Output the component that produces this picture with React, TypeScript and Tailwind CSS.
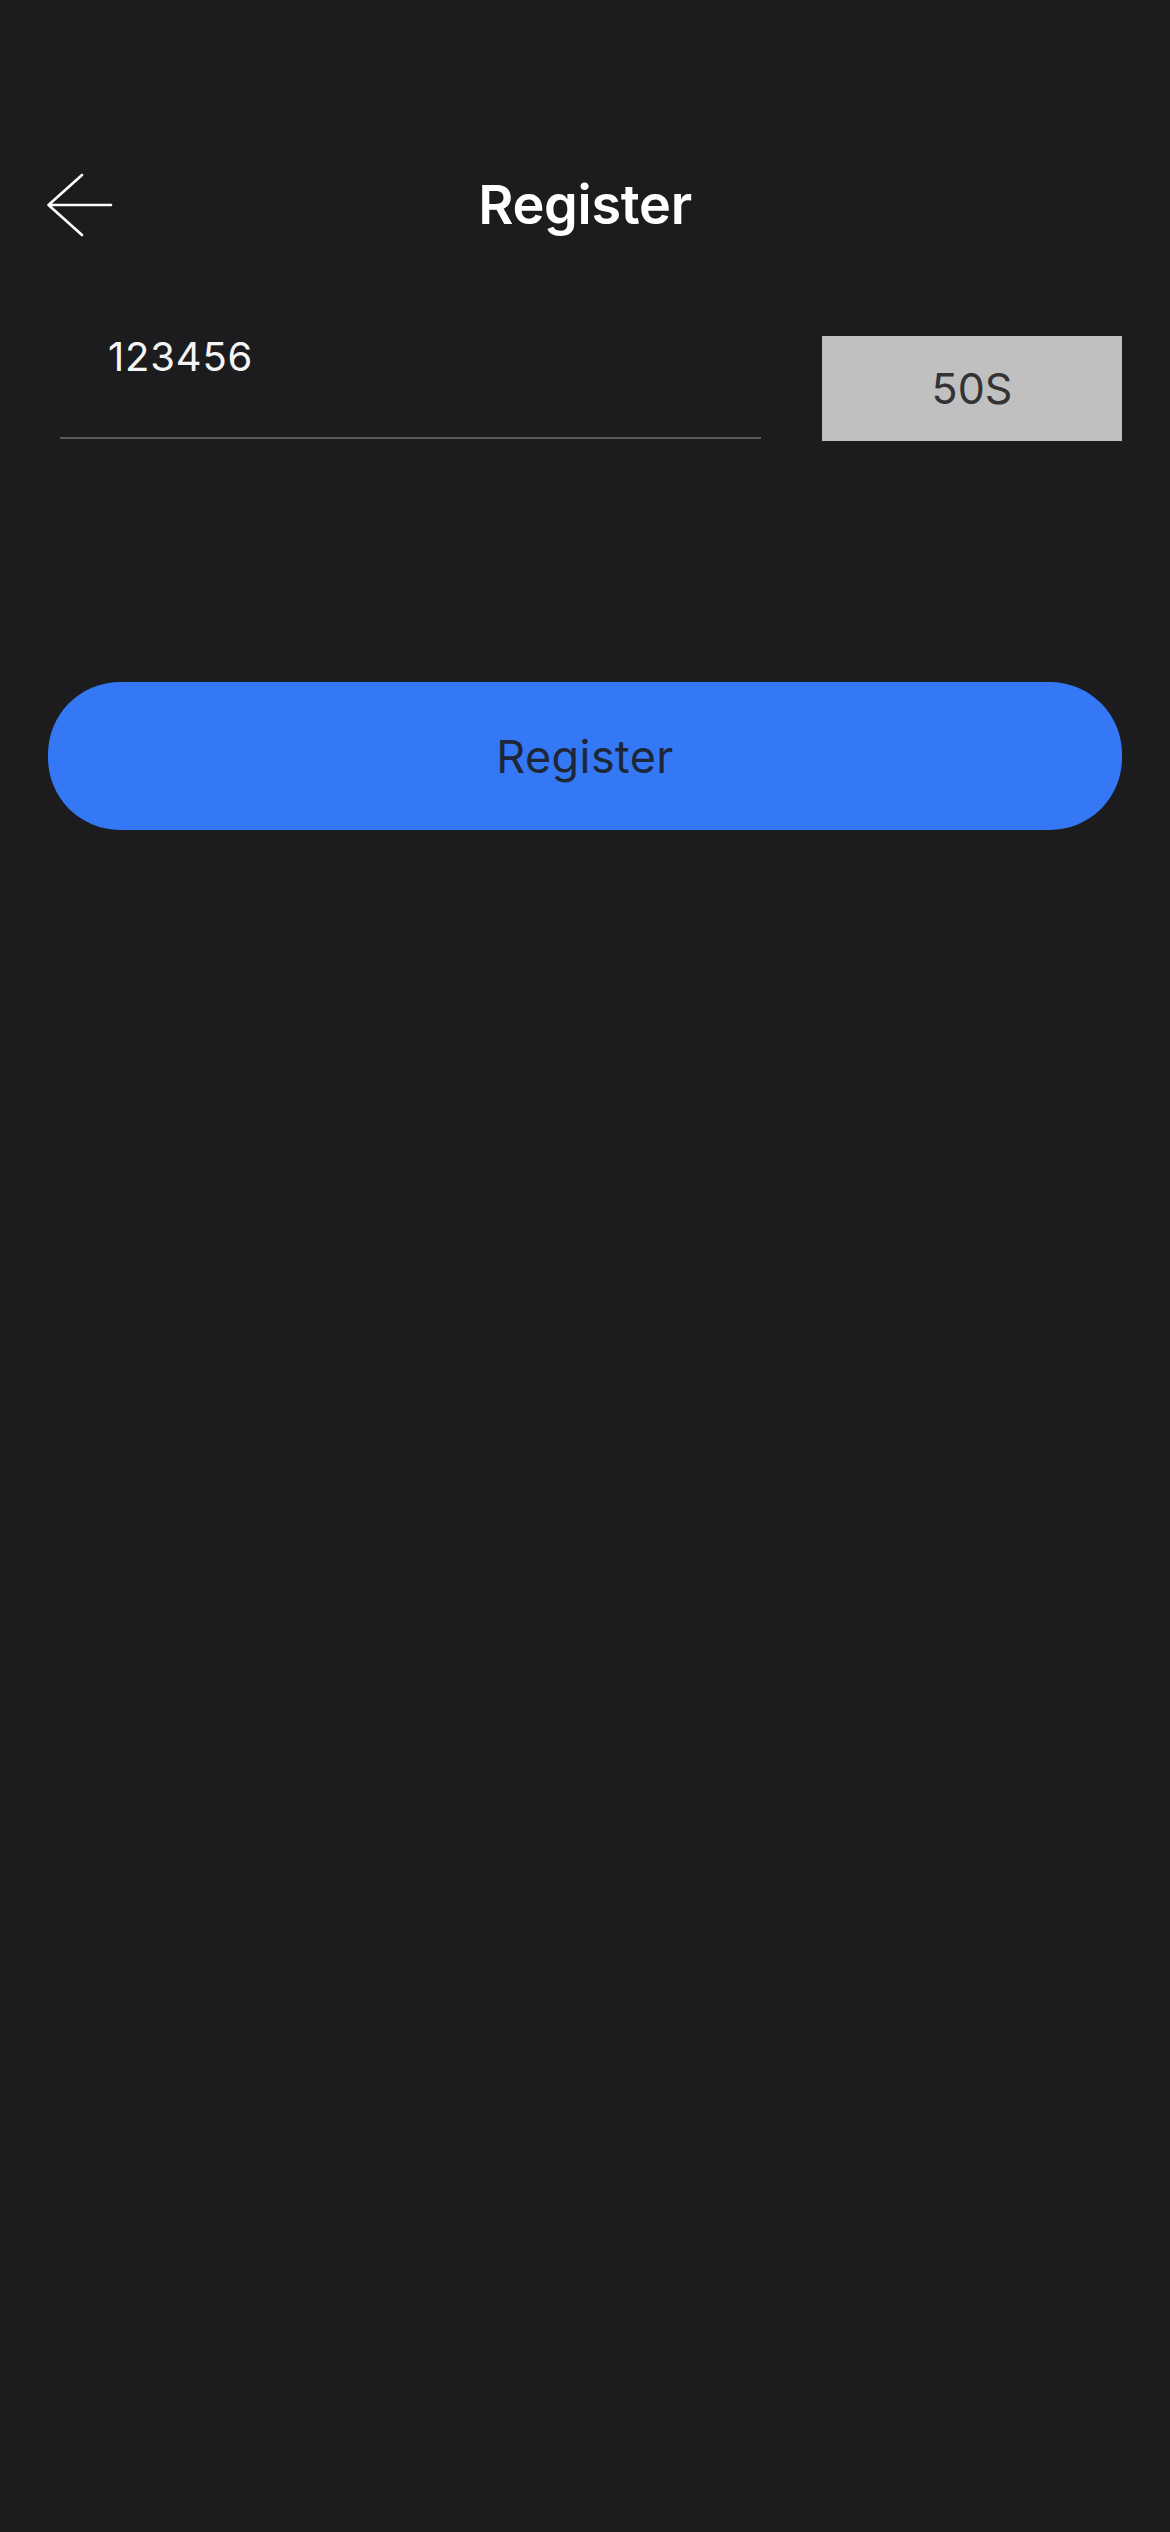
import React from "react";

export default function App() {
  return (
    <div
      className="min-h-[2532px] w-full bg-[#1c1c1e]"
      style={{ fontFamily: "Inter, 'Noto Sans', sans-serif" }}
    >
      <div className="pt-[165px]">
        {/* Header */}
        <div className="grid h-[80px] grid-cols-[1fr_auto_1fr] items-center">
          <div className="flex items-center pl-[47px]">
            <svg width="66" height="66" viewBox="0 0 66 66" fill="none">
              <path
                d="M1.5 33 L35 3 M1.5 33 L35 63 M1.5 33 L64 33"
                stroke="#ffffff"
                strokeWidth="2.6"
                strokeLinecap="round"
                strokeLinejoin="round"
              />
            </svg>
          </div>
          <h1 className="text-[54px] font-semibold leading-[80px] text-white tracking-[-0.3px]">
            Register
          </h1>
          <div />
        </div>

        {/* Code row */}
        <div className="mt-[91px] flex items-start pl-[60px] pr-[48px]">
          <div className="h-[103px] flex-1 border-b-2 border-[#5a5a5c] pl-[48px] pt-[1px]">
            <span className="text-[40px] leading-[40px] tracking-[0.8px] text-[#f5f5f5]">123456</span>
          </div>
          <div className="ml-[61px] flex h-[105px] w-[300px] items-center justify-center bg-[#c0c0c0]">
            <span className="text-[43px] leading-none text-[#333335]">50S</span>
          </div>
        </div>

        {/* Register button */}
        <div className="mt-[241px] px-[48px]">
          <button className="flex h-[148px] w-full items-center justify-center rounded-[72px] bg-[#3478f6]">
            <span className="text-[45px] leading-none tracking-[0.4px] text-[#1e2738]">Register</span>
          </button>
        </div>
      </div>
    </div>
  );
}
